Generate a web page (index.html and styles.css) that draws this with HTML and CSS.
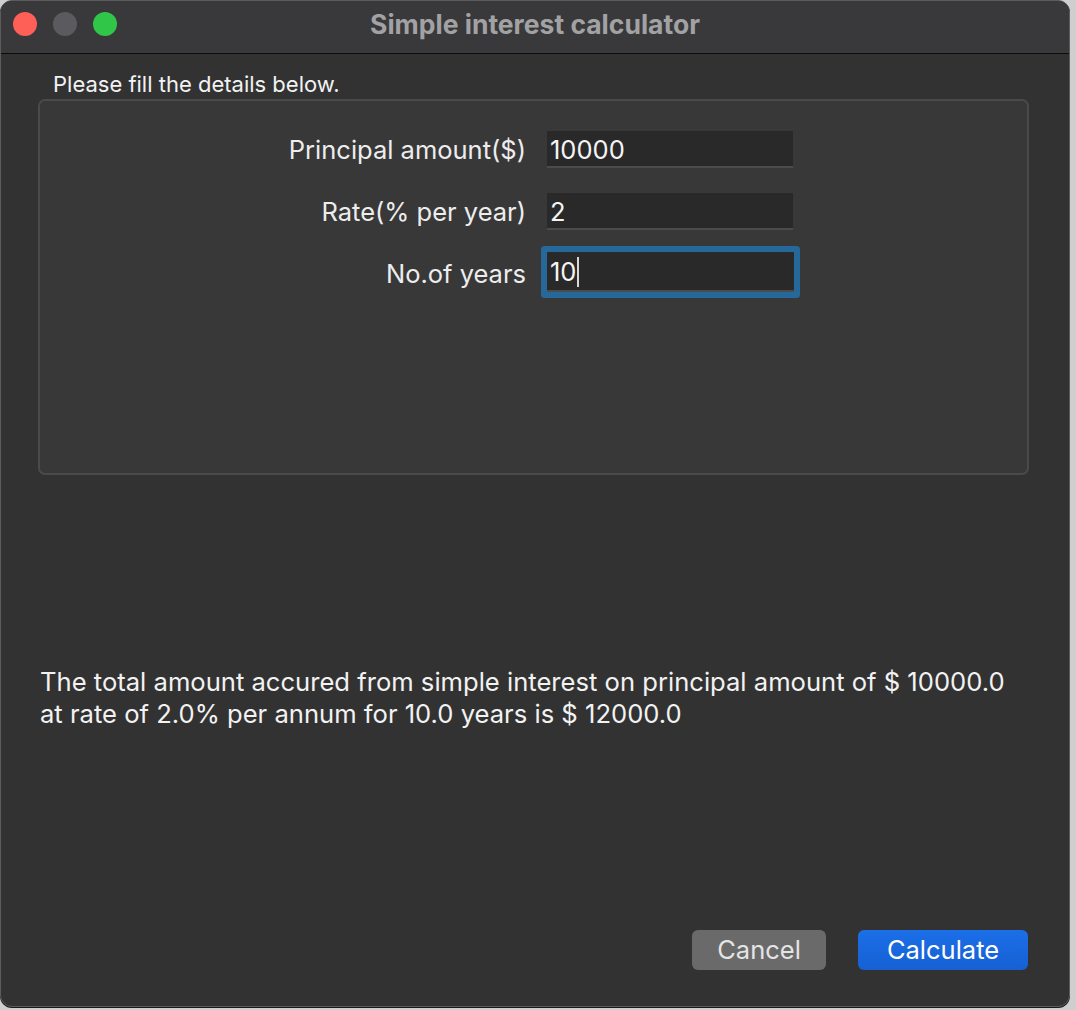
FILE: index.html
```html
<!DOCTYPE html>
<html>
<head>
<meta charset="utf-8">
<link rel="stylesheet" href="styles.css">
</head>
<body>
<div class="window">
  <div class="titlebar">
    <div class="lights">
      <span class="light red"></span>
      <span class="light gray"></span>
      <span class="light green"></span>
    </div>
    <div class="title">Simple interest calculator</div>
    <div class="spacer"></div>
  </div>
  <div class="content">
    <div class="caption">Please fill the details below.</div>
    <div class="group">
      <div class="form">
        <div class="label">Principal amount($)</div>
        <div class="field">10000</div>
        <div class="label">Rate(% per year)</div>
        <div class="field">2</div>
        <div class="label">No.of years</div>
        <div class="field focused">10<span class="caret"></span></div>
      </div>
    </div>
    <div class="result">The total amount accured from simple interest on principal amount of $ 10000.0<br>at rate of 2.0% per annum for 10.0 years is $ 12000.0</div>
    <div class="buttons">
      <div class="btn cancel">Cancel</div>
      <div class="btn primary">Calculate</div>
    </div>
  </div>
</div>
</body>
</html>
```
FILE: styles.css
```css
html, body {
  margin: 0;
  padding: 0;
}
body {
  background: #cfcfcf;
  width: 1076px;
  height: 1010px;
  overflow: hidden;
  font-family: Inter, "Noto Sans", "DejaVu Sans", sans-serif;
  color: #ececec;
}
.window {
  width: 1068px;
  height: 1005px;
  background: #323232;
  border: 1px solid #5c5c5c;
  border-radius: 12px;
  overflow: hidden;
  box-shadow: 0 1px 0 #1a1a1a;
}
.titlebar {
  height: 51px;
  background: #39393b;
  border-bottom: 1px solid #0c0c0c;
  display: grid;
  grid-template-columns: 1fr auto 1fr;
  align-items: center;
  padding-bottom: 1px;
}
.lights {
  display: flex;
  gap: 16px;
  padding-left: 12px;
  margin-top: -5px;
}
.light {
  width: 24px;
  height: 24px;
  border-radius: 50%;
  display: block;
}
.red { background: #fe5f57; }
.gray { background: #5b5b5f; }
.green { background: #30c748; }
.title {
  font-size: 26.5px;
  line-height: 32px;
  font-weight: 700;
  color: #a2a2a4;
  margin-top: -6px;
}
.content {
  padding: 17px 40px 0 38px;
}
.caption {
  font-size: 22px;
  line-height: 26px;
  margin-left: 14px;
  color: #f2f2f2;
}
.group {
  margin-top: 2px;
  background: #383838;
  border: 2px solid #4a4a4a;
  border-radius: 7px;
  padding-top: 30px;
  box-sizing: border-box;
  height: 376px;
  margin-left: -1px;
}
.form {
  display: grid;
  grid-template-columns: 486px 246px;
  column-gap: 21px;
  row-gap: 25px;
  align-items: center;
}
.label {
  text-align: right;
  font-size: 25.5px;
  line-height: 37px;
  color: #ededed;
}
.field {
  height: 37px;
  line-height: 37px;
  background: #292929;
  border-bottom: 2px solid #4b4b4b;
  box-sizing: border-box;
  padding-left: 3px;
  font-size: 25.5px;
  color: #f4f4f4;
}
.field.focused {
  height: 40px;
  line-height: 40px;
  width: 247px;
  border-radius: 1px;
  box-shadow: 0 0 0 6px #27689a;
  margin-top: -4px;
}
.caret {
  display: inline-block;
  width: 2px;
  height: 30px;
  background: #d8d8d8;
  vertical-align: middle;
  margin-left: 1px;
  margin-top: -4px;
}
.result {
  margin-top: 191px;
  margin-left: 1px;
  font-size: 25.6px;
  line-height: 32px;
  color: #f2f2f2;
}
.buttons {
  display: flex;
  justify-content: flex-end;
  gap: 32px;
  margin-top: 200px;
  margin-right: 1px;
}
.btn {
  height: 40px;
  line-height: 40px;
  border-radius: 6px;
  text-align: center;
  font-size: 25.5px;
}
.cancel {
  width: 134px;
  background: #6a6a6a;
  color: #e4e4e4;
}
.primary {
  width: 170px;
  background: linear-gradient(#1b6fe8, #1660d4);
  color: #ffffff;
}
```
